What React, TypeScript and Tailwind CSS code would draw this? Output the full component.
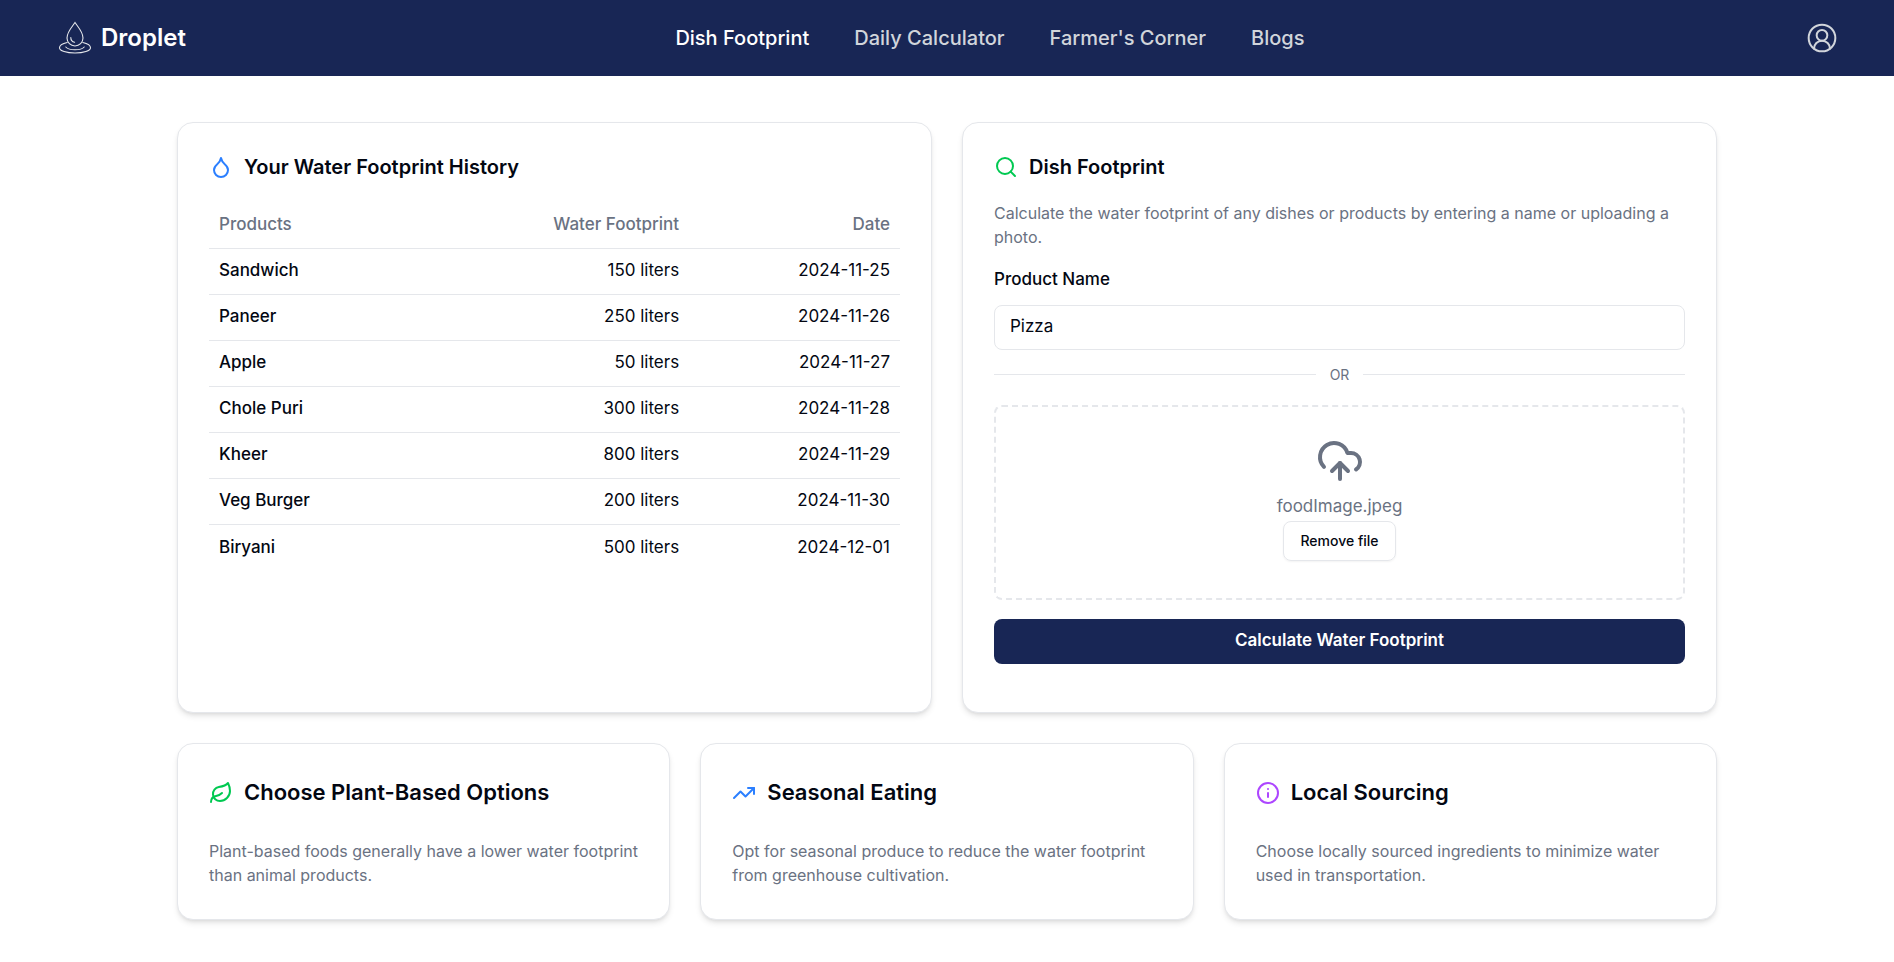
import React from 'react';
import { Droplet, Search, CloudUpload, Leaf, TrendingUp, Info, CircleUserRound } from 'lucide-react';

const history = [
  ['Sandwich', '150 liters', '2024-11-25'],
  ['Paneer', '250 liters', '2024-11-26'],
  ['Apple', '50 liters', '2024-11-27'],
  ['Chole Puri', '300 liters', '2024-11-28'],
  ['Kheer', '800 liters', '2024-11-29'],
  ['Veg Burger', '200 liters', '2024-11-30'],
  ['Biryani', '500 liters', '2024-12-01'],
];

const tips = [
  {
    title: 'Choose Plant-Based Options',
    text: 'Plant-based foods generally have a lower water footprint than animal products.',
    icon: <Leaf className="w-6 h-6 text-green-500" />,
  },
  {
    title: 'Seasonal Eating',
    text: 'Opt for seasonal produce to reduce the water footprint from greenhouse cultivation.',
    icon: <TrendingUp className="w-6 h-6 text-blue-500" />,
  },
  {
    title: 'Local Sourcing',
    text: 'Choose locally sourced ingredients to minimize water used in transportation.',
    icon: <Info className="w-6 h-6 text-purple-500" />,
  },
];

const DropletLogo = () => (
  <svg viewBox="0 0 34 34" className="w-[34px] h-[34px]" fill="none" stroke="#e5e7eb" strokeWidth="1.1" strokeLinecap="round">
    <path d="M17 1.5C14.5 5.5 9 10.5 9 17c0 4.6 3.6 8 8 8s8-3.4 8-8c0-6.5-5.5-11.500-8-15.500z" />
    <path d="M12.800 16.500c0 2.600 1.700 4.400 3.800 4.800" />
    <path d="M9.200 21.500C4.300 22.600 1.500 24.500 1.500 26.800c0 3 7 5.200 15.500 5.200s15.500-2.200 15.500-5.200c0-2.300-2.800-4.200-7.700-5.300" />
    <path d="M7.800 26c1.500 1.700 5 2.800 9.200 2.800s7.700-1.100 9.200-2.800" />
  </svg>
);

const App: React.FC = () => {
  return (
    <div className="min-h-screen bg-white text-[#030712] font-['Inter',sans-serif]">
      {/* Navbar */}
      <nav className="h-[76px] bg-[#172554] bg-[#182655] flex items-center justify-between pl-[58px] pr-[56px]">
        <div className="flex items-center gap-[9px]">
          <DropletLogo />
          <span className="text-2xl font-semibold text-white">Droplet</span>
        </div>
        <div className="flex items-center gap-[45px] text-xl font-medium text-[#d1d5db] ml-[-12px]">
          <span className="text-white">Dish Footprint</span>
          <span>Daily Calculator</span>
          <span>Farmer's Corner</span>
          <span>Blogs</span>
        </div>
        <CircleUserRound className="w-8 h-8 text-[#d1d5db]" strokeWidth={1.5} />
      </nav>

      {/* Main */}
      <main className="w-[1540px] mx-auto pt-[46px]">
        <div className="grid grid-cols-2 gap-[30px]">
          {/* History */}
          <section className="h-[591px] rounded-2xl border border-gray-200 bg-white shadow-md px-[31px] pt-[30px]">
            <div className="flex items-center gap-[11px]">
              <Droplet className="w-6 h-6 text-blue-500" />
              <h2 className="text-xl font-semibold">Your Water Footprint History</h2>
            </div>
            <table className="w-full mt-[21px] text-[17px]">
              <thead>
                <tr className="border-b border-gray-200 text-gray-500">
                  <th className="h-[46px] px-[10px] text-left font-medium">Products</th>
                  <th className="h-[46px] px-[10px] text-right font-medium">Water Footprint</th>
                  <th className="h-[46px] px-[10px] text-right font-medium">Date</th>
                </tr>
              </thead>
              <tbody>
                {history.map((row) => (
                  <tr key={row[0]} className="border-b border-gray-200 last:border-b-0">
                    <td className="h-[46px] px-[10px] font-medium">{row[0]}</td>
                    <td className="h-[46px] px-[10px] text-right">{row[1]}</td>
                    <td className="h-[46px] px-[10px] text-right">{row[2]}</td>
                  </tr>
                ))}
              </tbody>
            </table>
          </section>

          {/* Dish footprint */}
          <section className="h-[591px] rounded-2xl border border-gray-200 bg-white shadow-md px-[31px] pt-[30px]">
            <div className="flex items-center gap-[11px]">
              <Search className="w-6 h-6 text-green-500" />
              <h2 className="text-xl font-semibold">Dish Footprint</h2>
            </div>
            <p className="mt-[20px] text-base leading-6 text-gray-500">
              Calculate the water footprint of any dishes or products by entering a name or uploading a photo.
            </p>
            <label className="block mt-[18px] text-[17px] font-medium">Product Name</label>
            <div className="mt-[12px] h-[45px] rounded-lg border border-gray-200 flex items-center px-[15px] text-[17px]">Pizza</div>
            <div className="flex items-center gap-[14px] mt-[15px] text-sm text-gray-500">
              <div className="flex-1 border-t border-gray-200" />
              <span>OR</span>
              <div className="flex-1 border-t border-gray-200" />
            </div>
            <div className="mt-[20px] h-[195px] rounded-lg border-2 border-dashed border-gray-200 flex flex-col items-center pt-[30px]">
              <CloudUpload className="w-12 h-12 text-gray-500" />
              <span className="mt-[9px] text-[17px] text-gray-500">foodImage.jpeg</span>
              <button className="mt-[2px] h-10 px-4 rounded-lg border border-gray-200 shadow-xs text-sm font-medium">Remove file</button>
            </div>
            <button className="mt-[19px] w-full h-[45px] rounded-lg bg-[#182655] text-white text-[17px] font-semibold">Calculate Water Footprint</button>
          </section>
        </div>

        {/* Tips */}
        <div className="grid grid-cols-3 gap-[30px] mt-[30px]">
          {tips.map((tip) => (
            <section key={tip.title} className="h-[177px] rounded-2xl border border-gray-200 bg-white shadow-md px-[31px] pt-[32px]">
              <div className="flex items-center gap-[11px]">
                {tip.icon}
                <h3 className="text-[22px] font-semibold">{tip.title}</h3>
              </div>
              <p className="mt-[30px] text-base leading-6 text-gray-500">{tip.text}</p>
            </section>
          ))}
        </div>
      </main>
    </div>
  );
};

export default App;
